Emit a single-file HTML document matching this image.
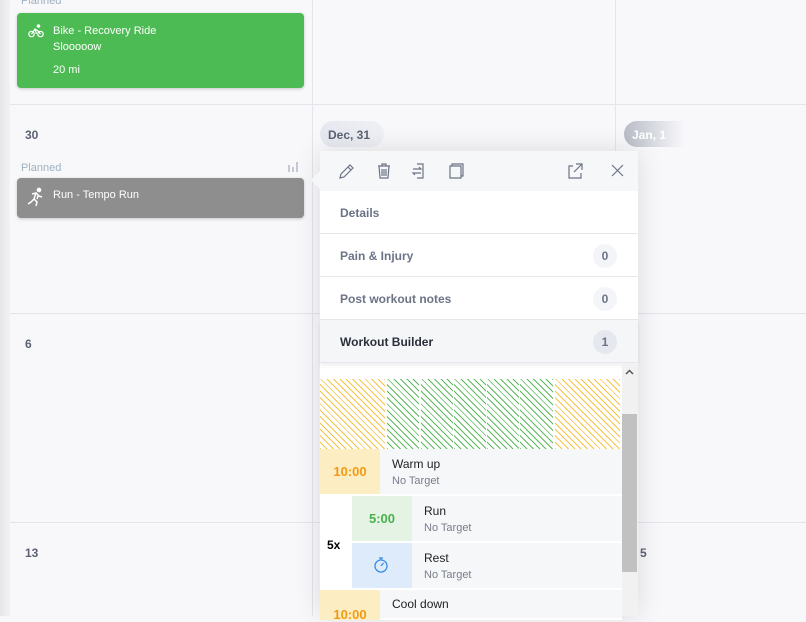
<!DOCTYPE html>
<html><head><style>
*{margin:0;padding:0;box-sizing:border-box}
body{width:806px;height:616px;overflow:hidden;background:#f8f8fb;font-family:"Liberation Sans",sans-serif;position:relative}
.a{position:absolute}
.vl{position:absolute;top:0;width:1px;height:616px;background:#e4e5ec}
.hl{position:absolute;left:10px;width:796px;height:1px;background:#e4e5ec}
.day{position:absolute;font-size:12px;font-weight:bold;color:#5c6273}
.card{position:absolute;left:17px;width:287px;border-radius:4px;color:#fff;font-size:11px;box-shadow:0 1px 3px rgba(0,0,0,.2)}
.pl{position:absolute;font-size:11px;color:#9fb1c0}
.row{position:absolute;left:320px;width:318px;height:43px;border-bottom:1px solid #e5e7ec;font-size:12px;font-weight:bold;color:#6b7385;padding:15px 0 0 20px;background:#fff}
.badge{position:absolute;right:21px;top:10px;width:24px;height:24px;border-radius:12px;background:#f4f5f8;text-align:center;line-height:24px;font-size:12px;color:#6b7385}
.seg{position:absolute;top:379px;height:70px}
.y{background:repeating-linear-gradient(45deg,#f6c445 0 1px,#fff 1px 4.5px)}
.g{background:repeating-linear-gradient(45deg,#5cb85c 0 1px,#fff 1px 4.5px)}
.st{position:absolute;left:320px;width:302px;background:#f6f7f9;border-bottom:2px solid #fff}
.tt{font-size:12px;color:#222}
.nt{font-size:11px;color:#777e8a;margin-top:4px}
.tm{font-weight:bold;font-size:13px;text-align:center}
</style></head><body>
<div class="a" style="left:0;top:0;width:10px;height:616px;background:linear-gradient(90deg,#e6e6ea,#f2f2f5)"></div>
<div class="vl" style="left:312px"></div>
<div class="vl" style="left:615px"></div>
<div class="hl" style="top:104px"></div>
<div class="hl" style="top:313px"></div>
<div class="hl" style="top:522px"></div>

<div class="pl" style="left:21px;top:-5px">Planned</div>
<div class="card" style="top:13px;height:75px;background:#4cbb54">
<svg class="a" style="left:11px;top:11px" width="16" height="14" viewBox="0 0 16 14" fill="none" stroke="#fff" stroke-width="1.2"><circle cx="3.5" cy="10" r="2.7"/><circle cx="12.5" cy="10" r="2.7"/><path d="M3.5 10 7 5 10 7 12.5 10M7 5l1.5 5"/><circle cx="10.5" cy="2" r="1.2" fill="#fff"/></svg>
<div class="a" style="left:36px;top:10px;line-height:16px">Bike - Recovery Ride<br>Slooooow</div>
<div class="a" style="left:36px;top:51px">20 mi</div>
</div>

<div class="day" style="left:25px;top:128px">30</div>
<div class="pl" style="left:21px;top:162px">Planned</div>
<svg class="a" style="left:288px;top:161px" width="11" height="11"><path d="M1 4v7M5 6v5M9 1v10" stroke="#c4c9d3" stroke-width="2"/></svg>
<div class="card" style="top:178px;height:40px;background:#8e8e8e">
<svg class="a" style="left:10px;top:9px" width="18" height="20" viewBox="0 0 18 20" fill="none" stroke="#fff" stroke-width="1.5"><circle cx="12" cy="3" r="1.6" fill="#fff"/><path d="M5 7l4-1 3 3 3 1M9 6l-2 6 3 3-1 4M7 12l-3 3-3 2M11 9l-1 3"/></svg>
<div class="a" style="left:36px;top:11px">Run - Tempo Run</div>
</div>

<div class="a" style="left:320px;top:121px;width:64px;height:26px;border-radius:13px;background:linear-gradient(90deg,#e6e8ef,#eef0f5);font-size:12px;font-weight:bold;color:#5c6273;padding:7px 0 0 8px">Dec, 31</div>
<div class="a" style="left:624px;top:121px;width:60px;height:26px;border-radius:13px 0 0 13px;background:linear-gradient(90deg,#b8bcc6,#f8f8fb);font-size:12px;font-weight:bold;color:#fff;padding:7px 0 0 8px">Jan, 1</div>
<div class="day" style="left:25px;top:337px">6</div>
<div class="day" style="left:25px;top:546px">13</div>
<div class="day" style="left:640px;top:546px">5</div>

<div class="a" style="left:320px;top:151px;width:318px;height:465px;box-shadow:0 0 25px rgba(0,0,0,.12);background:#fff"></div>
<div class="a" style="left:311px;top:171px;width:0;height:0;border-top:9px solid transparent;border-bottom:9px solid transparent;border-right:9px solid #f6f7f9"></div>
<div class="a" style="left:320px;top:151px;width:318px;height:40px;background:#f6f7f9"></div>
<svg class="a" style="left:337px;top:161px" width="290" height="20" fill="none" stroke="#6b7385" stroke-width="1.2">
<path d="M3 17l1-4L13 4l3 3-9 9zM11 6l3 3"/>
<path d="M41 5h12M45 5V3h4v2M42 5l1 12h8l1-12M45 8v7M47 8v7M49 8v7"/>
<path d="M80 3h6v14h-6M76 8h8l-2-2M84 12h-8l2 2"/>
<path d="M113 5h11v12h-11zM115 5V3h11v12h-2"/>
<path d="M236 5h-4v12h12v-5M239 3h6v6M245 3l-8 8"/>
<path d="M275 4l11 11M286 4l-11 11"/>
</svg>
<div class="row" style="top:191px">Details</div>
<div class="row" style="top:234px">Pain &amp; Injury<div class="badge">0</div></div>
<div class="row" style="top:277px">Post workout notes<div class="badge">0</div></div>
<div class="row" style="top:320px;background:#f5f6f8;color:#2a2f3a;box-shadow:0 3px 4px rgba(0,0,0,.06)">Workout Builder<div class="badge" style="background:#e6e8ef">1</div></div>

<div class="a" style="left:622px;top:364px;width:16px;height:252px;background:#f1f1f1"></div>
<div class="a" style="left:622px;top:414px;width:15px;height:158px;background:#c1c1c1"></div>
<svg class="a" style="left:625px;top:369px" width="9" height="6"><path d="M1 5l3.5-3.5L8 5" stroke="#555" stroke-width="1.5" fill="none"/></svg>

<div class="seg y" style="left:320px;width:65px"></div>
<div class="seg g" style="left:387px;width:32px"></div>
<div class="seg g" style="left:421px;width:32px"></div>
<div class="seg g" style="left:454px;width:32px"></div>
<div class="seg g" style="left:487px;width:32px"></div>
<div class="seg g" style="left:520px;width:33px"></div>
<div class="seg y" style="left:555px;width:65px"></div>

<div class="st" style="top:449px;height:47px">
<div class="a tm" style="left:0;top:0;width:60px;height:45px;background:#fdedc2;color:#f29a14;line-height:45px">10:00</div>
<div class="a" style="left:72px;top:8px"><div class="tt">Warm up</div><div class="nt">No Target</div></div></div>
<div class="a" style="left:320px;top:496px;width:32px;height:94px;background:#fff;font-size:12px;font-weight:bold;padding:42px 0 0 7px">5x</div>
<div class="st" style="top:496px;left:352px;width:270px;height:47px">
<div class="a tm" style="left:0;top:0;width:60px;height:45px;background:#e4f3e4;color:#48b04c;line-height:45px">5:00</div>
<div class="a" style="left:72px;top:8px"><div class="tt">Run</div><div class="nt">No Target</div></div></div>
<div class="st" style="top:543px;left:352px;width:270px;height:47px">
<div class="a" style="left:0;top:0;width:60px;height:45px;background:#ddebfb"><svg class="a" style="left:21px;top:13px" width="16" height="18" fill="none" stroke="#3a8ee6" stroke-width="1.3"><circle cx="8" cy="10" r="6"/><path d="M6 2h4M8 2v2M8 10l2.5-3"/></svg></div>
<div class="a" style="left:72px;top:8px"><div class="tt">Rest</div><div class="nt">No Target</div></div></div>
<div class="st" style="top:590px;height:30px">
<div class="a tm" style="left:0;top:0;width:60px;height:30px;background:#fdedc2;color:#f29a14;padding-top:17px">10:00</div>
<div class="a" style="left:72px;top:7px"><div class="tt">Cool down</div></div></div>
</body></html>
